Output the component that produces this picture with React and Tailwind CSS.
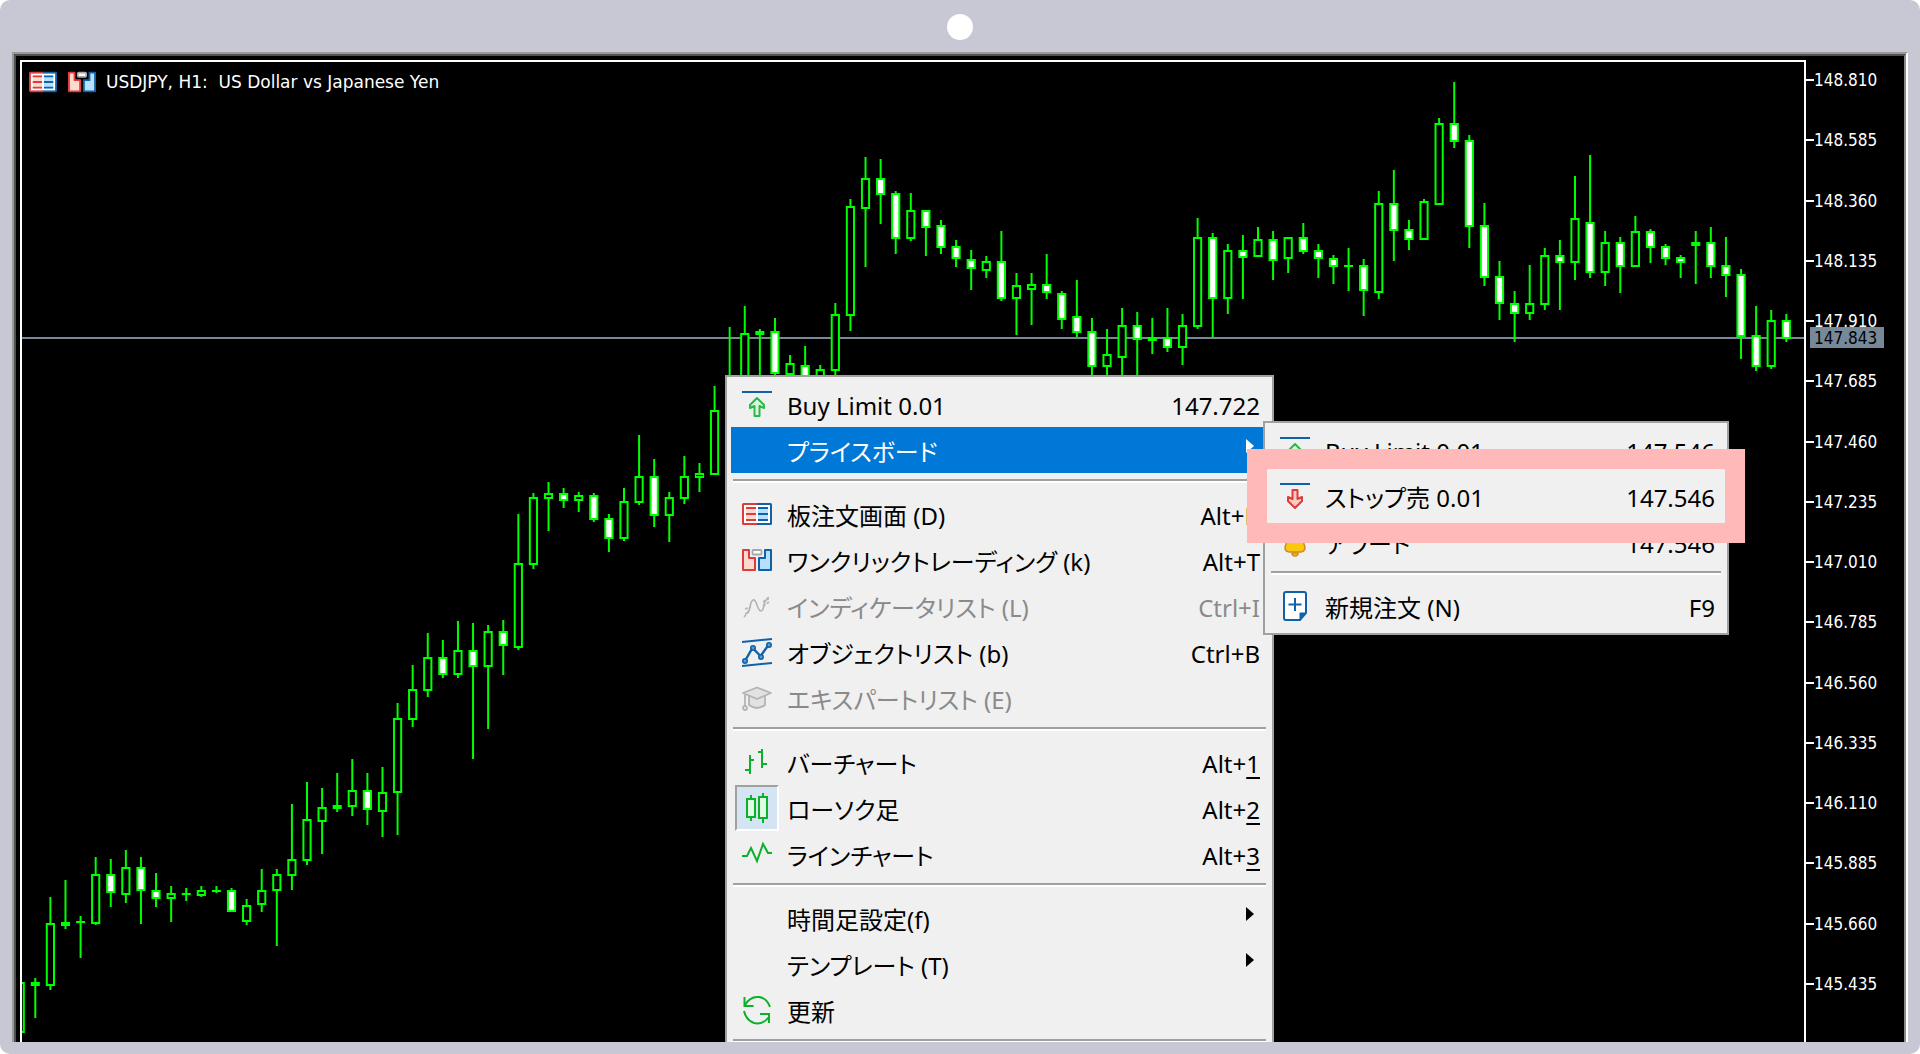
import clsx from "clsx";

const FIRST_X = 20.2;
const STEP = 15.095;

// [high, body top, body bottom, low, kind]
// h = hollow, f = filled white, s = solid green, d = doji
const candles = [
  [982, 982, 1033, 1033, "h"],
  [978, 982, 986, 1018, "s"],
  [897, 923, 986, 990, "h"],
  [880, 922, 926, 929, "s"],
  [916, 921, 923, 958, "d"],
  [857, 874, 924, 925, "h"],
  [859, 874, 893, 907, "f"],
  [850, 867, 895, 903, "h"],
  [857, 867, 891, 924, "f"],
  [873, 890, 899, 907, "f"],
  [886, 893, 899, 922, "h"],
  [888, 893, 895, 901, "d"],
  [886, 890, 896, 897, "h"],
  [886, 890, 892, 893, "d"],
  [888, 890, 912, 912, "f"],
  [899, 905, 922, 925, "h"],
  [869, 890, 905, 912, "h"],
  [869, 874, 891, 946, "h"],
  [804, 859, 876, 890, "h"],
  [782, 819, 861, 865, "h"],
  [788, 807, 822, 854, "h"],
  [773, 805, 809, 812, "s"],
  [759, 790, 807, 816, "h"],
  [773, 790, 810, 825, "f"],
  [767, 792, 812, 837, "h"],
  [703, 718, 793, 835, "h"],
  [665, 689, 720, 727, "h"],
  [633, 657, 691, 697, "h"],
  [640, 657, 675, 678, "f"],
  [621, 650, 675, 678, "h"],
  [623, 650, 667, 759, "f"],
  [625, 631, 667, 729, "h"],
  [620, 631, 646, 675, "f"],
  [514, 563, 648, 650, "h"],
  [493, 497, 565, 569, "h"],
  [482, 493, 499, 531, "h"],
  [488, 493, 501, 508, "f"],
  [492, 495, 501, 512, "h"],
  [493, 495, 520, 522, "f"],
  [514, 518, 539, 552, "f"],
  [488, 501, 539, 541, "h"],
  [435, 476, 503, 505, "h"],
  [459, 476, 516, 527, "f"],
  [492, 497, 516, 542, "h"],
  [456, 476, 499, 504, "h"],
  [463, 473, 478, 492, "h"],
  [386, 410, 475, 475, "h"],
  [327, 380, 440, 450, "h"],
  [306, 333, 400, 420, "h"],
  [329, 331, 335, 400, "s"],
  [318, 331, 374, 380, "f"],
  [355, 363, 375, 385, "h"],
  [346, 365, 390, 400, "f"],
  [365, 369, 390, 400, "h"],
  [303, 314, 371, 376, "h"],
  [199, 206, 316, 331, "h"],
  [157, 178, 209, 267, "h"],
  [159, 178, 195, 224, "f"],
  [191, 193, 239, 254, "f"],
  [193, 210, 239, 241, "h"],
  [210, 210, 228, 256, "f"],
  [220, 225, 248, 254, "f"],
  [240, 246, 259, 267, "f"],
  [250, 259, 269, 290, "f"],
  [256, 261, 271, 278, "h"],
  [231, 261, 299, 301, "f"],
  [273, 285, 299, 335, "h"],
  [273, 284, 290, 325, "h"],
  [254, 284, 293, 299, "f"],
  [291, 293, 320, 329, "f"],
  [280, 316, 333, 337, "f"],
  [318, 331, 367, 385, "f"],
  [329, 354, 367, 385, "h"],
  [308, 325, 358, 385, "h"],
  [312, 325, 340, 385, "f"],
  [318, 337, 341, 354, "s"],
  [308, 337, 348, 352, "f"],
  [314, 325, 348, 365, "h"],
  [218, 237, 327, 329, "h"],
  [233, 237, 299, 338, "f"],
  [244, 250, 299, 314, "h"],
  [235, 250, 258, 299, "f"],
  [227, 239, 257, 257, "h"],
  [231, 239, 261, 280, "f"],
  [237, 237, 259, 273, "h"],
  [223, 237, 252, 254, "f"],
  [244, 250, 259, 278, "f"],
  [255, 258, 267, 284, "f"],
  [248, 265, 267, 291, "d"],
  [259, 265, 291, 316, "f"],
  [191, 203, 293, 299, "h"],
  [170, 203, 231, 261, "f"],
  [220, 229, 240, 250, "f"],
  [199, 201, 240, 240, "h"],
  [118, 123, 205, 205, "h"],
  [82, 123, 142, 148, "f"],
  [135, 140, 227, 248, "f"],
  [203, 225, 278, 286, "f"],
  [261, 276, 304, 320, "f"],
  [291, 303, 314, 342, "f"],
  [265, 303, 314, 320, "h"],
  [248, 255, 305, 310, "h"],
  [240, 255, 263, 310, "f"],
  [176, 218, 263, 280, "h"],
  [155, 222, 273, 278, "f"],
  [231, 242, 273, 286, "h"],
  [237, 242, 267, 293, "f"],
  [216, 231, 267, 267, "h"],
  [229, 231, 248, 263, "f"],
  [244, 246, 259, 265, "f"],
  [255, 257, 263, 278, "f"],
  [231, 242, 246, 284, "s"],
  [227, 242, 267, 278, "f"],
  [237, 265, 276, 297, "f"],
  [269, 274, 337, 359, "f"],
  [306, 335, 367, 371, "f"],
  [310, 320, 367, 369, "h"],
  [314, 320, 339, 342, "f"],
];

const prices = [
  "148.810", "148.585", "148.360", "148.135", "147.910", "147.685", "147.460", "147.235",
  "147.010", "146.785", "146.560", "146.335", "146.110", "145.885", "145.660", "145.435",
];

const RED = "#dc3c3a";
const BLUE = "#0f62aa";
const GREEN = "#0bb02b";
const GRAY = "#b4b4b4";

function Svg({ children, className = "size-[30px]" }) {
  return (
    <svg viewBox="0 0 30 30" fill="none" className={clsx("shrink-0", className)} aria-hidden="true">
      {children}
    </svg>
  );
}

function BuyIcon() {
  return (
    <Svg>
      <path d="M0 3h30" stroke={BLUE} strokeWidth="2" />
      <path
        d="M15 9l7 7v3l-4.500-2v10h-5v-10l-4.500 2v-3z"
        stroke="#2bb94a"
        strokeWidth="2"
        strokeLinejoin="round"
        fill="#d9f7dd"
      />
    </Svg>
  );
}

function SellIcon() {
  return (
    <Svg>
      <path d="M0 3h30" stroke={BLUE} strokeWidth="2" />
      <path
        d="M12.500 9h5v9l4.500-2v4l-7 7-7-7v-4l4.500 2z"
        stroke={RED}
        strokeWidth="2"
        strokeLinejoin="round"
        fill="#ffc9c0"
      />
    </Svg>
  );
}

function DepthIcon({ className }) {
  return (
    <Svg className={className}>
      <path d="M15 4h13.500q1.500 0 1.500 1.500v19q0 1.500-1.500 1.500h-13.500z" fill={BLUE} />
      <path d="M15 4h-13.500q-1.500 0-1.500 1.500v19q0 1.500 1.500 1.500h13.500z" fill={RED} />
      <path d="M2 6h26v18h-26z" fill="#fff" />
      <path d="M4 8h10v14h-10z" fill="#ffd8d0" />
      <path d="M16 8h10v14h-10z" fill="#b5e0ff" />
      <path d="M4 9h10M4 15h10M4 21h10" stroke={RED} strokeWidth="2" />
      <path d="M16 9h10M16 15h10M16 21h10" stroke={BLUE} strokeWidth="2" />
    </Svg>
  );
}

function OneClickIcon({ className }) {
  return (
    <Svg className={className}>
      <path d="M1 5h6v8h6v12h-12z" fill="#ffd8d0" stroke={RED} strokeWidth="2" strokeLinejoin="round" />
      <path d="M29 5h-6v8h-6v12h12z" fill="#b5e0ff" stroke={BLUE} strokeWidth="2" strokeLinejoin="round" />
      <rect x="10.500" y="5" width="9" height="4.500" rx="1" fill="#fff" stroke="#a8a8a8" strokeWidth="1.800" />
    </Svg>
  );
}

function IndicatorIcon() {
  return (
    <Svg>
      <path d="M3 23q4-1 5-7t3-7q2-1 4 5t4 6q2 0 3-6t5-6" stroke={GRAY} strokeWidth="1.600" />
      <path d="M2 26l6-7M3 18l6-2M21 11l6-5M21 15l6-4" stroke={GRAY} strokeWidth="1.600" strokeDasharray="3 1.500" />
    </Svg>
  );
}

function ObjectsIcon() {
  return (
    <Svg>
      <path d="M0 5l30-3M0 29l30-3" stroke={BLUE} strokeWidth="2" />
      <path d="M3.500 23l7-12 8 8 8-11" stroke={BLUE} strokeWidth="2.400" />
      <g fill="#5d9bd0" stroke={BLUE} strokeWidth="1.600">
        <circle cx="3" cy="24" r="2.200" />
        <circle cx="11" cy="11" r="2.200" />
        <circle cx="19" cy="20" r="2.200" />
        <circle cx="27" cy="8" r="2.200" />
      </g>
    </Svg>
  );
}

function ExpertIcon() {
  return (
    <Svg>
      <path d="M7 13v9q8 6 16 0v-9" fill="#e2e2e2" stroke={GRAY} strokeWidth="1.800" />
      <path d="M15 4.500l14 5.500-14 6-14-6z" fill="#e2e2e2" stroke={GRAY} strokeWidth="1.800" strokeLinejoin="round" />
      <path d="M3 11v12" stroke={GRAY} strokeWidth="1.800" />
      <circle cx="3" cy="25" r="2" stroke={GRAY} strokeWidth="1.800" />
    </Svg>
  );
}

function BarsIcon() {
  return (
    <Svg>
      <path d="M8 8v19M8 13h4M3 23h5M20 2v19M16 5h4M20 17h5" stroke={GREEN} strokeWidth="2" />
    </Svg>
  );
}

function CandlesIcon() {
  return (
    <Svg>
      <path d="M9 2v26M21 0v30" stroke={GREEN} strokeWidth="2" />
      <path d="M5 6h8v18h-8zM17 4h8v21h-8z" fill="#dffbe3" stroke={GREEN} strokeWidth="2" />
    </Svg>
  );
}

function LineIcon() {
  return (
    <Svg>
      <path d="M0 17h5l4-8 6 13 6-17 5 9h4" stroke={GREEN} strokeWidth="2" />
    </Svg>
  );
}

function RefreshIcon() {
  return (
    <Svg>
      <path d="M3 10q5-9 14-8 8 1 11 10M2 16q2 9 10 12 9 2 15-6" stroke={GREEN} strokeWidth="2" />
      <path d="M2.500 2v9h9M18 19h9v9" stroke={GREEN} strokeWidth="2" />
    </Svg>
  );
}

function BellIcon() {
  return (
    <Svg>
      <path d="M12 26a3 3 0 0 0 6 0z" fill="#fac80a" stroke="#cf8b2a" strokeWidth="1.500" />
      <path d="M15 3q7 0 8 9l1 5q3 7-3 8h-12q-6-1-3-8l1-5q1-9 8-9z" fill="#fac80a" stroke="#cf8b2a" strokeWidth="1.600" />
    </Svg>
  );
}

function NewOrderIcon() {
  return (
    <Svg>
      <path d="M6 1h18q2 0 2 2v19l-6 7h-14q-2 0-2-2v-24q0-2 2-2z" fill="#fff" stroke={BLUE} strokeWidth="2" />
      <path d="M26 22h-6v7z" fill={BLUE} stroke={BLUE} strokeWidth="1" />
      <path d="M15 7v13M8.500 13.500h13" stroke={BLUE} strokeWidth="2" />
    </Svg>
  );
}

function MenuArrow() {
  return (
    <svg viewBox="0 0 8 14" fill="currentColor" className="mr-3.5 mb-2 h-3.5 w-2" aria-hidden="true">
      <path d="M0 0l8 7-8 7z" />
    </svg>
  );
}

function Separator() {
  return <li role="separator" className="mx-0.5 mt-1.5 mb-2 h-1 border-t-2 border-b-2 border-t-[#a0a0a0] border-b-white" />;
}

function MenuItem({ icon, label, shortcut, hotkey, disabled, active, checked, arrow, children }) {
  return (
    <li role="none" className="relative">
      <button
        type="button"
        role="menuitem"
        disabled={disabled}
        className={clsx(
          "flex h-[46px] w-full items-center text-left",
          disabled && "text-[#8a8a8a]",
          active && "bg-[#0078d7] text-white"
        )}
      >
        <span
          className={clsx(
            "mr-2 ml-1 flex h-full w-11 items-center justify-center border-2",
            checked ? "border-t-[#a0a0a0] border-r-white border-b-white border-l-[#a0a0a0] bg-[#d5e4f2]" : "border-transparent"
          )}
        >
          {icon}
        </span>
        <span className="flex-1 pt-1">{label}</span>
        {shortcut && (
          <span className="pt-1 pr-2">
            {shortcut}
            {hotkey && <u className="underline-offset-4">{hotkey}</u>}
          </span>
        )}
        {arrow && <MenuArrow />}
      </button>
      {children}
    </li>
  );
}

function Menu({ className, children, label }) {
  return (
    <ul
      role="menu"
      aria-label={label}
      className={clsx(
        "absolute border-2 border-[#a0a0a0] bg-[#f0f0f0] p-1 text-2xl whitespace-nowrap text-black",
        "font-['Noto_Sans','Noto_Sans_CJK_JP',sans-serif] [font-feature-settings:'palt']",
        className
      )}
    >
      {children}
    </ul>
  );
}

function PriceBoardMenu() {
  return (
    <Menu label="プライスボード" className="-top-1.5 left-full -ml-[5px] w-[466px]">
      <MenuItem icon={<BuyIcon />} label="Buy Limit 0.01" shortcut="147.546" />
      <MenuItem icon={<SellIcon />} label="ストップ売 0.01" shortcut="147.546">
        <span className="pointer-events-none absolute -inset-x-[22px] -inset-y-6 z-10 border-20 border-[#ffb9b9]" />
      </MenuItem>
      <MenuItem icon={<BellIcon />} label="アラート" shortcut="147.546" />
      <Separator />
      <MenuItem icon={<NewOrderIcon />} label="新規注文 (N)" shortcut="F9" />
    </Menu>
  );
}

function ContextMenu() {
  return (
    <Menu label="Chart" className="top-[319px] left-[709px] w-[549px]">
      <MenuItem icon={<BuyIcon />} label="Buy Limit 0.01" shortcut="147.722" />
      <MenuItem label="プライスボード" active arrow>
        <PriceBoardMenu />
      </MenuItem>
      <Separator />
      <MenuItem icon={<DepthIcon />} label="板注文画面 (D)" shortcut="Alt+B" />
      <MenuItem icon={<OneClickIcon />} label="ワンクリックトレーディング (k)" shortcut="Alt+T" />
      <MenuItem icon={<IndicatorIcon />} label="インディケータリスト (L)" shortcut="Ctrl+I" disabled />
      <MenuItem icon={<ObjectsIcon />} label="オブジェクトリスト (b)" shortcut="Ctrl+B" />
      <MenuItem icon={<ExpertIcon />} label="エキスパートリスト (E)" disabled />
      <Separator />
      <MenuItem icon={<BarsIcon />} label="バーチャート" shortcut="Alt+" hotkey="1" />
      <MenuItem icon={<CandlesIcon />} label="ローソク足" shortcut="Alt+" hotkey="2" checked />
      <MenuItem icon={<LineIcon />} label="ラインチャート" shortcut="Alt+" hotkey="3" />
      <Separator />
      <MenuItem label="時間足設定(f)" arrow />
      <MenuItem label="テンプレート (T)" arrow />
      <MenuItem icon={<RefreshIcon />} label="更新" />
      <Separator />
    </Menu>
  );
}

function Candle({ x, data }) {
  const [high, top, bottom, low, kind] = data;
  return (
    <g>
      <path d={`M${x} ${high}V${low}`} />
      {kind === "d" || kind === "s" ? (
        <rect x={x - 4.5} y={top} width="9" height={bottom - top} fill="#00ff00" stroke="none" />
      ) : (
        <rect x={x - 3.6} y={top + 1} width="7.200" height={bottom - top - 2} fill={kind === "f" ? "#fff" : "#000"} />
      )}
    </g>
  );
}

function Chart() {
  return (
    <svg viewBox="22 62 1782 980" className="block h-auto w-full [grid-area:1/1]" role="img" aria-label="USDJPY H1">
      <path d="M22 338H1804" stroke="#778899" strokeWidth="2" />
      <g stroke="#00ff00" strokeWidth="2" fill="none">
        {candles.map((c, i) => (
          <Candle key={i} x={FIRST_X + i * STEP} data={c} />
        ))}
      </g>
    </svg>
  );
}

function PriceAxis() {
  return (
    <div className="relative w-[98px] shrink-0 font-['DejaVu_Sans_Condensed','DejaVu_Sans',sans-serif]">
      <ul className="flex h-full flex-col justify-between pt-2.5 pb-12">
        {prices.map((p) => (
          <li key={p} className="flex h-5 items-center">
            <span className="h-0.5 w-2 bg-white" />
            {p}
          </li>
        ))}
      </ul>
      <span className="absolute top-[267px] left-1 flex h-[21px] w-[74px] items-center bg-[#778899] pl-1 text-black">
        147.843
      </span>
    </div>
  );
}

function App() {
  return (
    <div className="bg-white">
      <div className="flex flex-col rounded-[10px] bg-[#c8c8d4] px-3 pb-3">
        {/* camera */}
        <div className="flex h-[52px] items-center justify-center pt-0.5">
          <span className="size-[26px] rounded-full bg-white" />
        </div>

        {/* screen */}
        <div className="border-t-2 border-r-2 border-l-2 border-t-[#999] border-r-white border-l-[#999]">
          <div className="border-t-2 border-r-2 border-l-2 border-t-[#505050] border-r-[#8c8c8c] border-l-[#505050]">
            <div className="relative flex overflow-hidden bg-black pt-1 pl-1 text-[17px] leading-5 text-white">
              <div className="grid flex-1 border-t-2 border-r-2 border-l-2 border-white">
                <Chart />
                <header className="flex items-center self-start pt-1.5 pl-[7px] [grid-area:1/1]">
                  <DepthIcon className="mr-[11px] size-7" />
                  <OneClickIcon className="mr-2.5 size-7" />
                  <h1 className="font-['DejaVu_Sans',sans-serif] whitespace-pre">USDJPY, H1:  US Dollar vs Japanese Yen</h1>
                </header>
              </div>
              <PriceAxis />
              <ContextMenu />
            </div>
          </div>
        </div>
      </div>
    </div>
  );
}

export default App;
